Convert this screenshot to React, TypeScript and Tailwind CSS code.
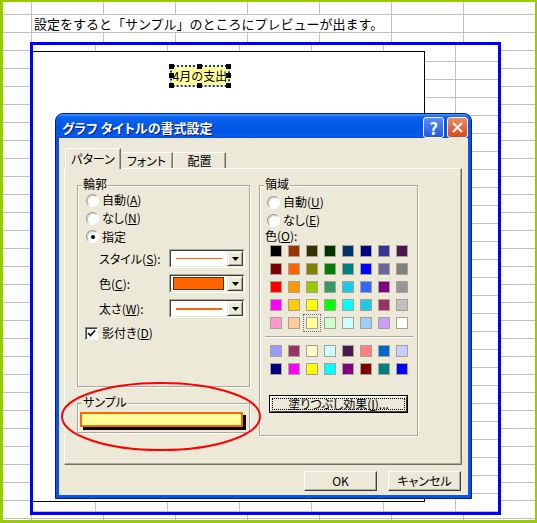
import React from "react";

const JP = "font-['Noto_Sans_CJK_JP',sans-serif]";

const PALETTE_TOP = [
  ["#000000", "#993300", "#333300", "#003300", "#003366", "#000080", "#333399", "#4a1850"],
  ["#800000", "#ff6600", "#808000", "#008000", "#008080", "#0000ff", "#666699", "#808080"],
  ["#ff0000", "#ff9900", "#99cc00", "#339966", "#1ec8e6", "#3366ff", "#800080", "#969696"],
  ["#ff00ff", "#ffcc00", "#ffff00", "#00ff00", "#00ffff", "#1ec8e6", "#993366", "#c0c0c0"],
  ["#ff99cc", "#ffcc99", "#ffff99", "#ccffcc", "#ccffff", "#99ccff", "#cc99ff", "#ffffff"]
];

const PALETTE_BOTTOM = [
  ["#9999ff", "#993366", "#ffffcc", "#ccffff", "#4a1850", "#ff8080", "#0066cc", "#ccccff"],
  ["#000080", "#ff00ff", "#ffff00", "#00ffff", "#800080", "#800000", "#008080", "#0000ff"]
];

function Radio({ checked }: { checked?: boolean }) {
  return (
    <span className="flex h-[13px] w-[13px] shrink-0 items-center justify-center rounded-full border border-t-[#9d9a8c] border-l-[#9d9a8c] border-r-white border-b-white bg-white shadow-[inset_1px_1px_0_#d4d0c8]">
      {checked && <span className="h-[4px] w-[4px] rounded-full bg-black" />}
    </span>
  );
}

function Check() {
  return (
    <span className="flex h-[13px] w-[13px] shrink-0 items-center justify-center border border-t-[#808080] border-l-[#808080] border-r-white border-b-white bg-white shadow-[inset_1px_1px_0_#404040]">
      <svg width="9" height="9" viewBox="0 0 9 9">
        <path d="M1 4 L3.5 6.5 L8 1.5" stroke="#000" strokeWidth="1.6" fill="none" />
      </svg>
    </span>
  );
}

function DropButton() {
  return (
    <div className="flex w-[16px] shrink-0 items-center justify-center border border-t-[#ece9d8] border-l-[#ece9d8] border-r-[#404040] border-b-[#404040] bg-[#ece9d8] shadow-[inset_1px_1px_0_#fff,inset_-1px_-1px_0_#aca899]">
      <svg width="7" height="4" viewBox="0 0 7 4">
        <path d="M0 0 H7 L3.5 4 Z" fill="#000" />
      </svg>
    </div>
  );
}

function Combo({ children }: { children: React.ReactNode }) {
  return (
    <div className="flex h-[19px] w-[76px] border border-t-[#aca899] border-l-[#aca899] border-r-white border-b-white">
      <div className="flex flex-1 border border-t-[#404040] border-l-[#404040] border-r-[#ece9d8] border-b-[#ece9d8] bg-white">
        <div className="flex flex-1">{children}</div>
        <DropButton />
      </div>
    </div>
  );
}

function Group({
  label,
  className,
  children
}: {
  label: string;
  className: string;
  children?: React.ReactNode;
}) {
  return (
    <div
      className={`relative border border-[#aca899] shadow-[inset_1px_1px_0_#fff,1px_1px_0_#fff] ${className}`}
    >
      <span className="absolute left-[4px] top-[-10px] bg-[#ece9d8] px-[1px] text-[12px] leading-[16px]">
        {label}
      </span>
      {children}
    </div>
  );
}

function Swatch({ color, selected }: { color: string; selected?: boolean }) {
  return (
    <div
      className={
        selected
          ? "h-[12px] w-[12px] border border-[#a6a396] outline-1 outline-offset-2 outline-dotted outline-[#6b6b6b]"
          : "h-[12px] w-[12px] border border-[#a6a396]"
      }
      style={{ backgroundColor: color }}
    />
  );
}

function ClassicButton({ children }: { children: React.ReactNode }) {
  return (
    <button
      type="button"
      className="flex h-[20px] w-[73px] items-center justify-center border border-t-white border-l-white border-r-[#404040] border-b-[#404040] bg-[#ece9d8] text-[12px] leading-none text-black shadow-[inset_-1px_-1px_0_#aca899]"
    >
      {children}
    </button>
  );
}

function ChartTitle() {
  const handle = "absolute h-[5px] w-[5px] bg-black";
  return (
    <div className="absolute left-[137px] top-[13px] h-[22px] w-[60px]">
      <div className="flex h-full w-full items-center justify-center rounded-[3px] border-2 border-dotted border-[#1530c8] bg-[#ffff99] text-[12px] leading-none text-black">
        4月の支出
      </div>
      <span className={`${handle} left-[-1px] top-[-1px]`} />
      <span className={`${handle} left-[27px] top-[-1px]`} />
      <span className={`${handle} right-[-1px] top-[-1px]`} />
      <span className={`${handle} left-[-1px] top-[8px]`} />
      <span className={`${handle} right-[-1px] top-[8px]`} />
      <span className={`${handle} bottom-[-1px] left-[-1px]`} />
      <span className={`${handle} bottom-[-1px] left-[27px]`} />
      <span className={`${handle} bottom-[-1px] right-[-1px]`} />
    </div>
  );
}

function Dialog() {
  return (
    <div className="absolute left-[55px] top-[113px] flex h-[386px] w-[417px] flex-col rounded-t-[8px] border border-[#0019a0] bg-[#0b52e6]">
      {/* title bar */}
      <div className="flex h-[24px] shrink-0 items-start justify-between rounded-t-[7px] bg-[linear-gradient(to_bottom,#4a9bff_0%,#0a64f0_12%,#0258e6_50%,#0055e5_80%,#0a5ef0_92%,#0047cf_100%)] pl-[6px] pr-[3px]">
        <span className="mt-[7px] text-[13px] font-bold leading-none text-white [font-feature-settings:'palt'] [text-shadow:1px_1px_0_#0a1c80]">
          グラフ タイトルの書式設定
        </span>
        <div className="mt-[3px] flex gap-[3px]">
          <div className="flex h-[21px] w-[21px] items-center justify-center rounded-[3px] border border-white bg-[linear-gradient(to_bottom,#5b8ff8,#2358e0)] text-[17px] font-bold leading-none text-white">
            ?
          </div>
          <div className="flex h-[21px] w-[21px] items-center justify-center rounded-[3px] border border-white bg-[linear-gradient(to_bottom,#f08a62,#d9471c)]">
            <svg width="11" height="11" viewBox="0 0 11 11">
              <path d="M1 1 L10 10 M10 1 L1 10" stroke="#fff" strokeWidth="2" />
            </svg>
          </div>
        </div>
      </div>

      {/* body */}
      <div className="mx-[3px] mb-[3px] flex flex-1 flex-col bg-[#ece9d8] text-[12px] text-black [font-feature-settings:'palt']">
        {/* tabs */}
        <div className="mt-[10px] flex h-[20px] items-end pl-[6px]">
          <div className="relative z-10 -mb-[1px] flex h-[21px] w-[56px] items-center justify-center rounded-tl-[2px] border-l border-t border-r border-l-white border-t-white border-r-[#716f64] bg-[#ece9d8] pb-[1px] shadow-[inset_-1px_0_0_#aca899]">
            パターン
          </div>
          <div className="flex h-[16px] w-[52px] items-center justify-center rounded-tl-[2px] border-t border-r border-t-white border-r-[#716f64] shadow-[inset_-1px_0_0_#aca899]">
            フォント
          </div>
          <div className="flex h-[16px] w-[53px] items-center justify-center rounded-tl-[2px] border-l border-t border-r border-l-white border-t-white border-r-[#716f64] shadow-[inset_-1px_0_0_#aca899]">
            配置
          </div>
        </div>

        {/* pane */}
        <div className="ml-[5px] flex h-[297px] w-[398px] gap-[9px] border border-t-white border-l-white border-r-[#716f64] border-b-[#716f64] pl-[12px] pt-[16px] shadow-[inset_-1px_-1px_0_#aca899]">
          <div className="flex w-[173px] flex-col gap-[16px]">
            <Group label="輪郭" className="h-[202px] w-[173px]">
              <div className="flex flex-col pt-[5px]">
                <div className="flex h-[18px] items-center gap-[3px] pl-[8px]">
                  <Radio />
                  <span>
                    自動(<u>A</u>)
                  </span>
                </div>
                <div className="flex h-[18px] items-center gap-[3px] pl-[8px]">
                  <Radio />
                  <span>
                    なし(<u>N</u>)
                  </span>
                </div>
                <div className="flex h-[19px] items-center gap-[3px] pl-[8px]">
                  <Radio checked />
                  <span>指定</span>
                </div>
                <div className="flex h-[25px] items-center pl-[21px]">
                  <span className="w-[70px]">
                    スタイル(<u>S</u>):
                  </span>
                  <Combo>
                    <div className="flex flex-1 items-center px-[5px]">
                      <div className="h-[1px] flex-1 bg-[#ff6600]" />
                    </div>
                  </Combo>
                </div>
                <div className="flex h-[25px] items-center pl-[21px]">
                  <span className="w-[70px]">
                    色(<u>C</u>):
                  </span>
                  <Combo>
                    <div className="flex flex-1 py-[1px] pl-[2px] pr-[3px]">
                      <div className="flex-1 border border-[#6a2a00] bg-[#ff6600]" />
                    </div>
                  </Combo>
                </div>
                <div className="flex h-[25px] items-center pl-[21px]">
                  <span className="w-[70px]">
                    太さ(<u>W</u>):
                  </span>
                  <Combo>
                    <div className="flex flex-1 items-center px-[5px]">
                      <div className="h-[2px] flex-1 bg-[#ff6600]" />
                    </div>
                  </Combo>
                </div>
                <div className="flex h-[24px] items-center gap-[4px] pl-[7px]">
                  <Check />
                  <span>
                    影付き(<u>D</u>)
                  </span>
                </div>
              </div>
            </Group>
            <Group label="サンプル" className="h-[30px] w-[173px]">
              <div className="pl-[2px] pt-[8px]">
                <div className="h-[15px] w-[163px] border-2 border-[#ff6600] bg-[#ffff99] shadow-[3px_3px_0_#000]" />
              </div>
            </Group>
          </div>

          <Group label="領域" className="h-[251px] w-[159px]">
            <div className="flex flex-col pt-[7px]">
              <div className="flex h-[18px] items-center gap-[3px] pl-[7px]">
                <Radio />
                <span>
                  自動(<u>U</u>)
                </span>
              </div>
              <div className="flex h-[18px] items-center gap-[3px] pl-[7px]">
                <Radio />
                <span>
                  なし(<u>E</u>)
                </span>
              </div>
              <div className="flex h-[13px] items-center pl-[5px]">
                <span>
                  色(<u>O</u>):
                </span>
              </div>
              <div className="ml-[10px] mt-[3px] grid grid-cols-[repeat(8,12px)] gap-[6px]">
                {PALETTE_TOP.flatMap((row, r) =>
                  row.map((c, i) => (
                    <Swatch key={`t${r}-${i}`} color={c} selected={r === 4 && i === 2} />
                  ))
                )}
              </div>
              <div className="ml-[5px] mt-[7px] h-[2px] w-[148px] border-t border-b border-t-[#aca899] border-b-white" />
              <div className="ml-[10px] mt-[7px] grid grid-cols-[repeat(8,12px)] gap-[6px]">
                {PALETTE_BOTTOM.flatMap((row, r) =>
                  row.map((c, i) => <Swatch key={`b${r}-${i}`} color={c} />)
                )}
              </div>
              <button
                type="button"
                className="ml-[9px] mt-[20px] flex h-[18px] w-[139px] border border-black bg-[#ece9d8] p-0"
              >
                <div className="flex flex-1 border border-t-white border-l-white border-r-[#404040] border-b-[#404040] p-[1px]">
                  <div className="flex flex-1 items-center justify-center border border-dotted border-black text-[12px] leading-none">
                    塗りつぶし効果(<u>I</u>)...
                  </div>
                </div>
              </button>
            </div>
          </Group>
        </div>

        {/* buttons */}
        <div className="mt-[6px] flex justify-end gap-[11px] pr-[7px]">
          <ClassicButton>OK</ClassicButton>
          <ClassicButton>キャンセル</ClassicButton>
        </div>
      </div>
    </div>
  );
}

export default function App() {
  return (
    <div
      className={`relative h-[523px] w-[537px] overflow-hidden bg-white bg-[linear-gradient(to_right,#c0c0c0_1px,transparent_1px),linear-gradient(to_bottom,#c0c0c0_1px,transparent_1px)] bg-size-[72px_18px] bg-position-[31px_14px] text-black ${JP}`}
    >
      {/* cell text */}
      <div className="absolute left-[32px] top-[15px] h-[17px] w-[358px] bg-white pl-[2px] text-[13px] leading-[17px]">
        設定をすると「サンプル」のところにプレビューが出ます。
      </div>

      {/* pasted screenshot frame */}
      <div className="absolute left-[30px] top-[42px] h-[473px] w-[471px] border-[3px] border-[#0000ff] bg-white bg-[linear-gradient(to_right,#c0c0c0_1px,transparent_1px),linear-gradient(to_bottom,#c0c0c0_1px,transparent_1px)] bg-size-[72px_18px] bg-position-[62px_16px]">
        <div className="absolute left-0 top-[6px] h-[451px] w-[392px] border border-l-0 border-black bg-white">
          <ChartTitle />
        </div>
      </div>

      <Dialog />

      {/* highlight ellipse */}
      <svg
        className="pointer-events-none absolute left-[60px] top-[381px]"
        width="202"
        height="71"
        viewBox="0 0 202 71"
      >
        <ellipse cx="101" cy="35.5" rx="99" ry="33.5" fill="none" stroke="#ff0000" strokeWidth="2" />
      </svg>

      <div className="pointer-events-none absolute inset-0 border-b-[3px] border-l-[3px] border-r-2 border-t-2 border-[#99cc00]" />
    </div>
  );
}
